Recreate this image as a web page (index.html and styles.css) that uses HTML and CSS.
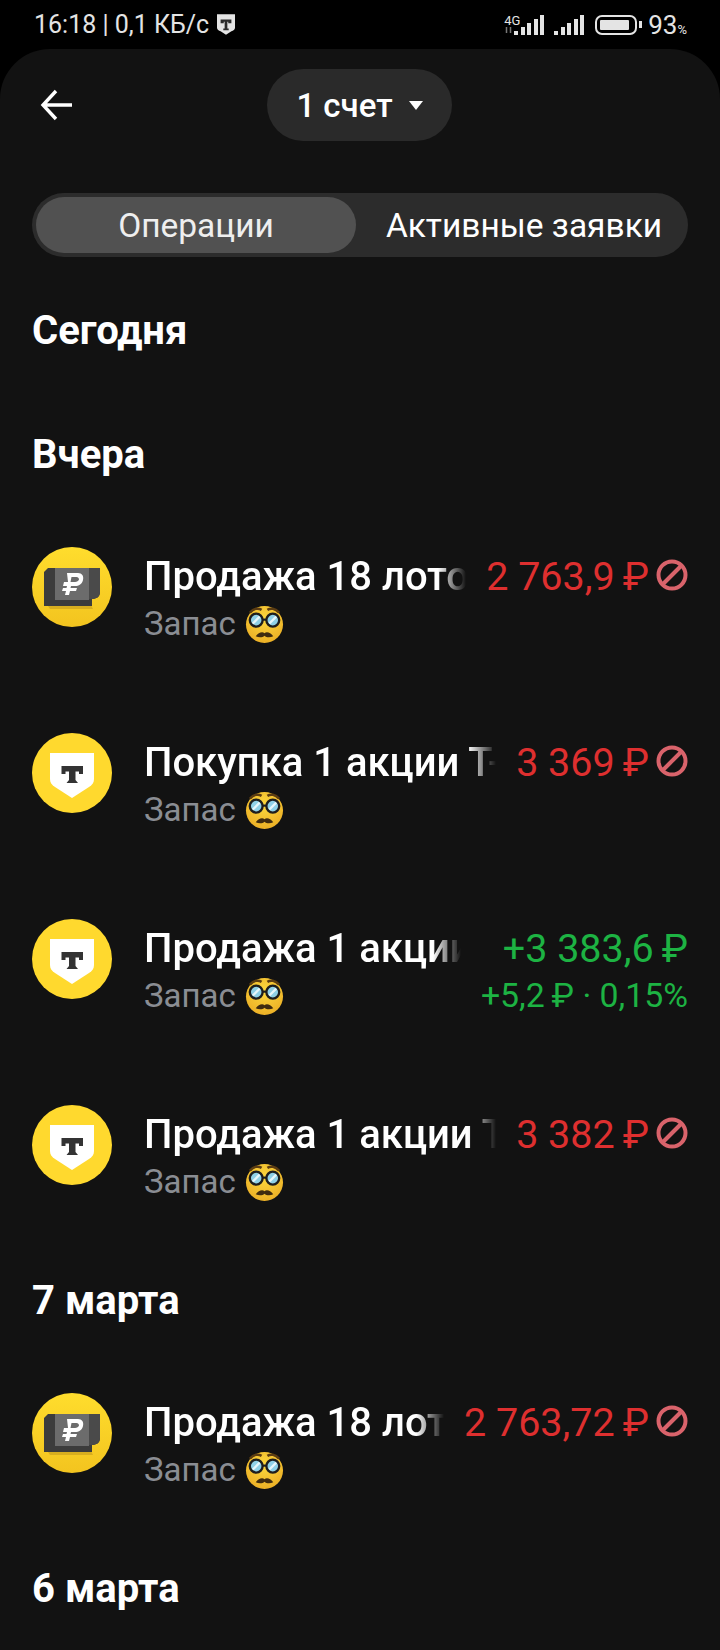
FILE: index.html
```html
<!DOCTYPE html>
<html lang="ru">
<head>
<meta charset="UTF-8">
<title>Операции</title>
<link rel="stylesheet" href="styles.css">
</head>
<body>
<svg class="defs" width="0" height="0">
	<symbol id="shield" viewBox="0 0 40 46">
		<path d="M0 0H40V30C40 34 36 36 32 38L20 46L8 38C4 36 0 34 0 30Z" fill="currentColor"/>
		<path d="M8 12H32V20H25V17H23V32H26V36H14V32H17V17H15V20H8Z" fill="#2b2b2b"/>
	</symbol>
	<radialGradient id="nerdFace" cx="50%" cy="35%" r="65%">
		<stop offset="0" stop-color="#fcd83e"/>
		<stop offset="1" stop-color="#ecb026"/>
	</radialGradient>
	<linearGradient id="coin" x1="0" y1="0" x2="0" y2="1">
		<stop offset="0" stop-color="#ffdd2d"/>
		<stop offset="1" stop-color="#f3c41f"/>
	</linearGradient>
	<symbol id="nerd" viewBox="0 0 40 40">
		<circle cx="20" cy="20" r="19" fill="url(#nerdFace)"/>
		<path d="M5 8C9 3 14 3 17 5M35 8C31 3 26 3 23 5" stroke="#5c3d12" stroke-width="2.600" fill="none"/>
		<circle cx="11.500" cy="15.500" r="6.600" fill="#8fd0e6" stroke="#1e1e1e" stroke-width="2.400"/>
		<circle cx="28.500" cy="15.500" r="6.600" fill="#8fd0e6" stroke="#1e1e1e" stroke-width="2.400"/>
		<path d="M8 19L15 12M25 19L32 12" stroke="#e6f6fa" stroke-width="2.400"/>
		<path d="M18 15H22" stroke="#1e1e1e" stroke-width="2.200"/>
		<path d="M11 32C14 28 18 27 20 29C22 27 26 28 29 32C26 33.500 22 33.500 20 31.500C18 33.500 14 33.500 11 32Z" fill="#3f2b10"/>
	</symbol>
	<symbol id="ban" viewBox="0 0 32 32">
		<circle cx="16" cy="16" r="13.500" fill="none" stroke="#d9636b" stroke-width="4"/>
		<path d="M7 25L25 7" stroke="#d9636b" stroke-width="4"/>
	</symbol>
	<symbol id="cash" viewBox="0 0 80 80">
		<circle cx="40" cy="40" r="40" fill="url(#coin)"/>
		<path d="M14 56H58L61 62H18Z" fill="#d8ae1f"/>
		<path d="M16 21H68V45C68 50 64 52 60 52V59H12V25Z" fill="#3c3c3c"/>
		<path d="M23 21H57V53H23Z" fill="#6c6c6c"/>
		<path d="M57 21H68V45C68 50 64 52 60 52H57Z" fill="#4a4a4a"/>
		<path d="M35 26H46C50 26 52 29 51 33C50 37 47 39 43 39H39L38.500 41H45L44 44H38L37 48H33L34 44H30L31 41H34.500L35 39H31L32 35H36ZM39.500 30L38.500 35H43C45 35 46.500 34 47 32.500C47 31 46 30 44.500 30Z" fill="#fff"/>
	</symbol>
	<symbol id="tlogo" viewBox="0 0 80 80">
		<circle cx="40" cy="40" r="40" fill="#ffd92e"/>
		<path d="M18 20H62V46C62 50 60 52 57 54L40 65L23 54C20 52 18 50 18 46Z" fill="#fff"/>
		<path d="M29.500 33H51V41H47V38.500H43.500V47L46 50H34.500L37 47V38.500H33.500V41H29.500Z" fill="#333"/>
	</symbol>
</svg>

<div class="status">
	<div class="status-left">
		<span>16:18 | 0,1 КБ/с</span>
		<svg class="status-shield"><use href="#shield"/></svg>
	</div>
	<div class="status-right">
		<div class="net">
			<span>4G</span>
			<svg class="net-arrows" viewBox="0 0 8 6"><path d="M2 0V6M6 0V6" stroke="#777" stroke-width="1.500"/></svg>
		</div>
		<div class="bars"><i class="b1"></i><i class="b2"></i><i class="b3"></i><i class="b4"></i><i class="b5"></i></div>
		<div class="bars"><i class="b1"></i><i class="b2"></i><i class="b3"></i><i class="b4"></i><i class="b5"></i></div>
		<div class="battery"><div class="battery-fill"></div></div>
		<div class="battery-tip"></div>
		<span class="percent">93<small>%</small></span>
	</div>
</div>

<main class="sheet">
	<header class="top">
		<svg class="back" viewBox="0 0 34 32"><path d="M32 16H3M16 2L3 16L16 30" fill="none" stroke="#fff" stroke-width="3.400"/></svg>
		<button class="account">1 счет <span class="caret"></span></button>
	</header>

	<div class="tabs">
		<div class="tab active">Операции</div>
		<div class="tab tab-second">Активные заявки</div>
	</div>

	<section class="day day-empty">
		<h2>Сегодня</h2>
	</section>

	<section class="day">
		<h2>Вчера</h2>
		<div class="row">
			<svg class="logo"><use href="#cash"/></svg>
			<div class="info">
				<div class="title">Продажа 18 лото</div>
				<div class="sub">Запас <svg class="nerd"><use href="#nerd"/></svg></div>
			</div>
			<div class="sum">
				<div class="amount red">2 763,9&thinsp;₽<svg class="ban"><use href="#ban"/></svg></div>
			</div>
		</div>
		<div class="row">
			<svg class="logo"><use href="#tlogo"/></svg>
			<div class="info">
				<div class="title">Покупка 1 акции Т-</div>
				<div class="sub">Запас <svg class="nerd"><use href="#nerd"/></svg></div>
			</div>
			<div class="sum">
				<div class="amount red">3 369&thinsp;₽<svg class="ban"><use href="#ban"/></svg></div>
			</div>
		</div>
		<div class="row">
			<svg class="logo"><use href="#tlogo"/></svg>
			<div class="info">
				<div class="title">Продажа 1 акции</div>
				<div class="sub">Запас <svg class="nerd"><use href="#nerd"/></svg></div>
			</div>
			<div class="sum">
				<div class="amount green">+3 383,6&thinsp;₽</div>
				<div class="yield green">+5,2&thinsp;₽ · 0,15%</div>
			</div>
		</div>
		<div class="row">
			<svg class="logo"><use href="#tlogo"/></svg>
			<div class="info">
				<div class="title">Продажа 1 акции Т</div>
				<div class="sub">Запас <svg class="nerd"><use href="#nerd"/></svg></div>
			</div>
			<div class="sum">
				<div class="amount red">3 382&thinsp;₽<svg class="ban"><use href="#ban"/></svg></div>
			</div>
		</div>
	</section>

	<section class="day">
		<h2>7 марта</h2>
		<div class="row">
			<svg class="logo"><use href="#cash"/></svg>
			<div class="info">
				<div class="title">Продажа 18 лот</div>
				<div class="sub">Запас <svg class="nerd"><use href="#nerd"/></svg></div>
			</div>
			<div class="sum">
				<div class="amount red">2 763,72&thinsp;₽<svg class="ban"><use href="#ban"/></svg></div>
			</div>
		</div>
	</section>

	<section class="day">
		<h2>6 марта</h2>
	</section>
</main>
</body>
</html>
```

FILE: styles.css
```css
html,body{margin: 0;padding: 0;height: 100%;}
body{
	width: 720px;
	height: 1650px;
	overflow: hidden;
	background: #000;
	color: #fff;
	font-family: Roboto, "Noto Sans", sans-serif;
}
.defs{display: block;height: 0;}

.status{
	height: 49px;
	padding: 0 33px 0 34px;
	display: flex;
	justify-content: space-between;
	align-items: center;
	font-size: 25px;
	color: #e4e4e4;
}
.status-left{display: flex;align-items: center;gap: 8px;}
.status-shield{width: 18px;height: 21px;color: #e4e4e4;}
.status-right{display: flex;align-items: center;}
.net{
	display: flex;
	flex-direction: column;
	width: 18px;
	height: 20px;
	margin: -2px -8px 0 0;
	font-size: 13px;
	line-height: 13px;
}
.net-arrows{width: 9px;height: 6px;}
.bars{display: flex;align-items: flex-end;gap: 2.5px;height: 20px;margin-right: 10px;}
.bars i{display: block;width: 4px;background: #e4e4e4;}
.bars .b1{height: 4px;}
.bars .b2{height: 8px;}
.bars .b3{height: 12px;}
.bars .b4{height: 16px;}
.bars .b5{height: 20px;}
.battery{
	width: 42px;
	height: 20px;
	box-sizing: border-box;
	border: 2px solid #e4e4e4;
	border-radius: 7px;
	padding: 3px;
	margin-left: 1px;
}
.battery-fill{height: 100%;width: 90%;background: #e4e4e4;border-radius: 1px;}
.battery-tip{width: 3px;height: 7px;background: #e4e4e4;margin: 0 6px 0 2px;}
.percent{font-size: 26px;}
.percent small{font-size: 13px;}

.sheet{
	height: 1601px;
	box-sizing: border-box;
	padding: 0 32px;
	background: #121212;
	border-radius: 50px 50px 0 0;
}
.top{
	height: 144px;
	position: relative;
	display: flex;
	justify-content: center;
	align-items: center;
}
.back{position: absolute;left: 8px;top: 40px;width: 34px;height: 32px;}
.account{
	width: 185px;
	height: 72px;
	margin: -32px 0 0 -1px;
	border: none;
	border-radius: 36px;
	background: #2a2a2a;
	color: #fff;
	font: 500 33px Roboto, sans-serif;
	display: flex;
	align-items: center;
	justify-content: center;
	gap: 16px;
}
.caret{
	width: 0;
	height: 0;
	border-left: 7px solid transparent;
	border-right: 7px solid transparent;
	border-top: 9px solid #fff;
}

.tabs{
	height: 64px;
	box-sizing: border-box;
	padding: 4px;
	display: flex;
	background: #2c2c2c;
	border-radius: 32px;
}
.tab{
	display: flex;
	align-items: center;
	justify-content: center;
	font-size: 33.500px;
	white-space: nowrap;
	flex: 1;
}
.tab-second{padding-left: 8px;}
.tab.active{flex: none;width: 320px;background: #515151;border-radius: 28px;color: #eee;}

.day{margin-top: 41px;}
.tabs + .day{margin-top: 52px;}
.day-empty{padding-bottom: 22px;}
.day h2{
	margin: 0 0 17px;
	font-size: 40px;
	line-height: 44px;
	font-weight: 700;
}
.row{
	height: 186px;
	box-sizing: border-box;
	padding-top: 53px;
	display: flex;
	align-items: flex-start;
	gap: 32px;
}
.logo{flex: none;width: 80px;height: 80px;}
.info{
	flex: 1;
	min-width: 0;
	margin: 7px -12px 0 0;
}
.title{
	font-size: 40px;
	line-height: 46px;
	font-weight: 500;
	white-space: nowrap;
	-webkit-mask-image: linear-gradient(to left, transparent 0, #000 28px);
	mask-image: linear-gradient(to left, transparent 0, #000 28px);
}
.sub{
	display: flex;
	align-items: center;
	gap: 9px;
	font-size: 33px;
	line-height: 48px;
	color: #8a8d93;
}
.nerd{width: 39px;height: 39px;}
.sum{flex: none;text-align: right;margin-top: 7px;}
.amount{
	display: flex;
	justify-content: flex-end;
	align-items: center;
	gap: 7px;
	font-size: 39.500px;
	line-height: 46px;
	white-space: nowrap;
}
.yield{font-size: 33.800px;line-height: 48px;white-space: nowrap;}
.ban{width: 32px;height: 32px;margin-top: -5px;}
.red{color: #de2f2f;}
.green{color: #1db343;}
```
